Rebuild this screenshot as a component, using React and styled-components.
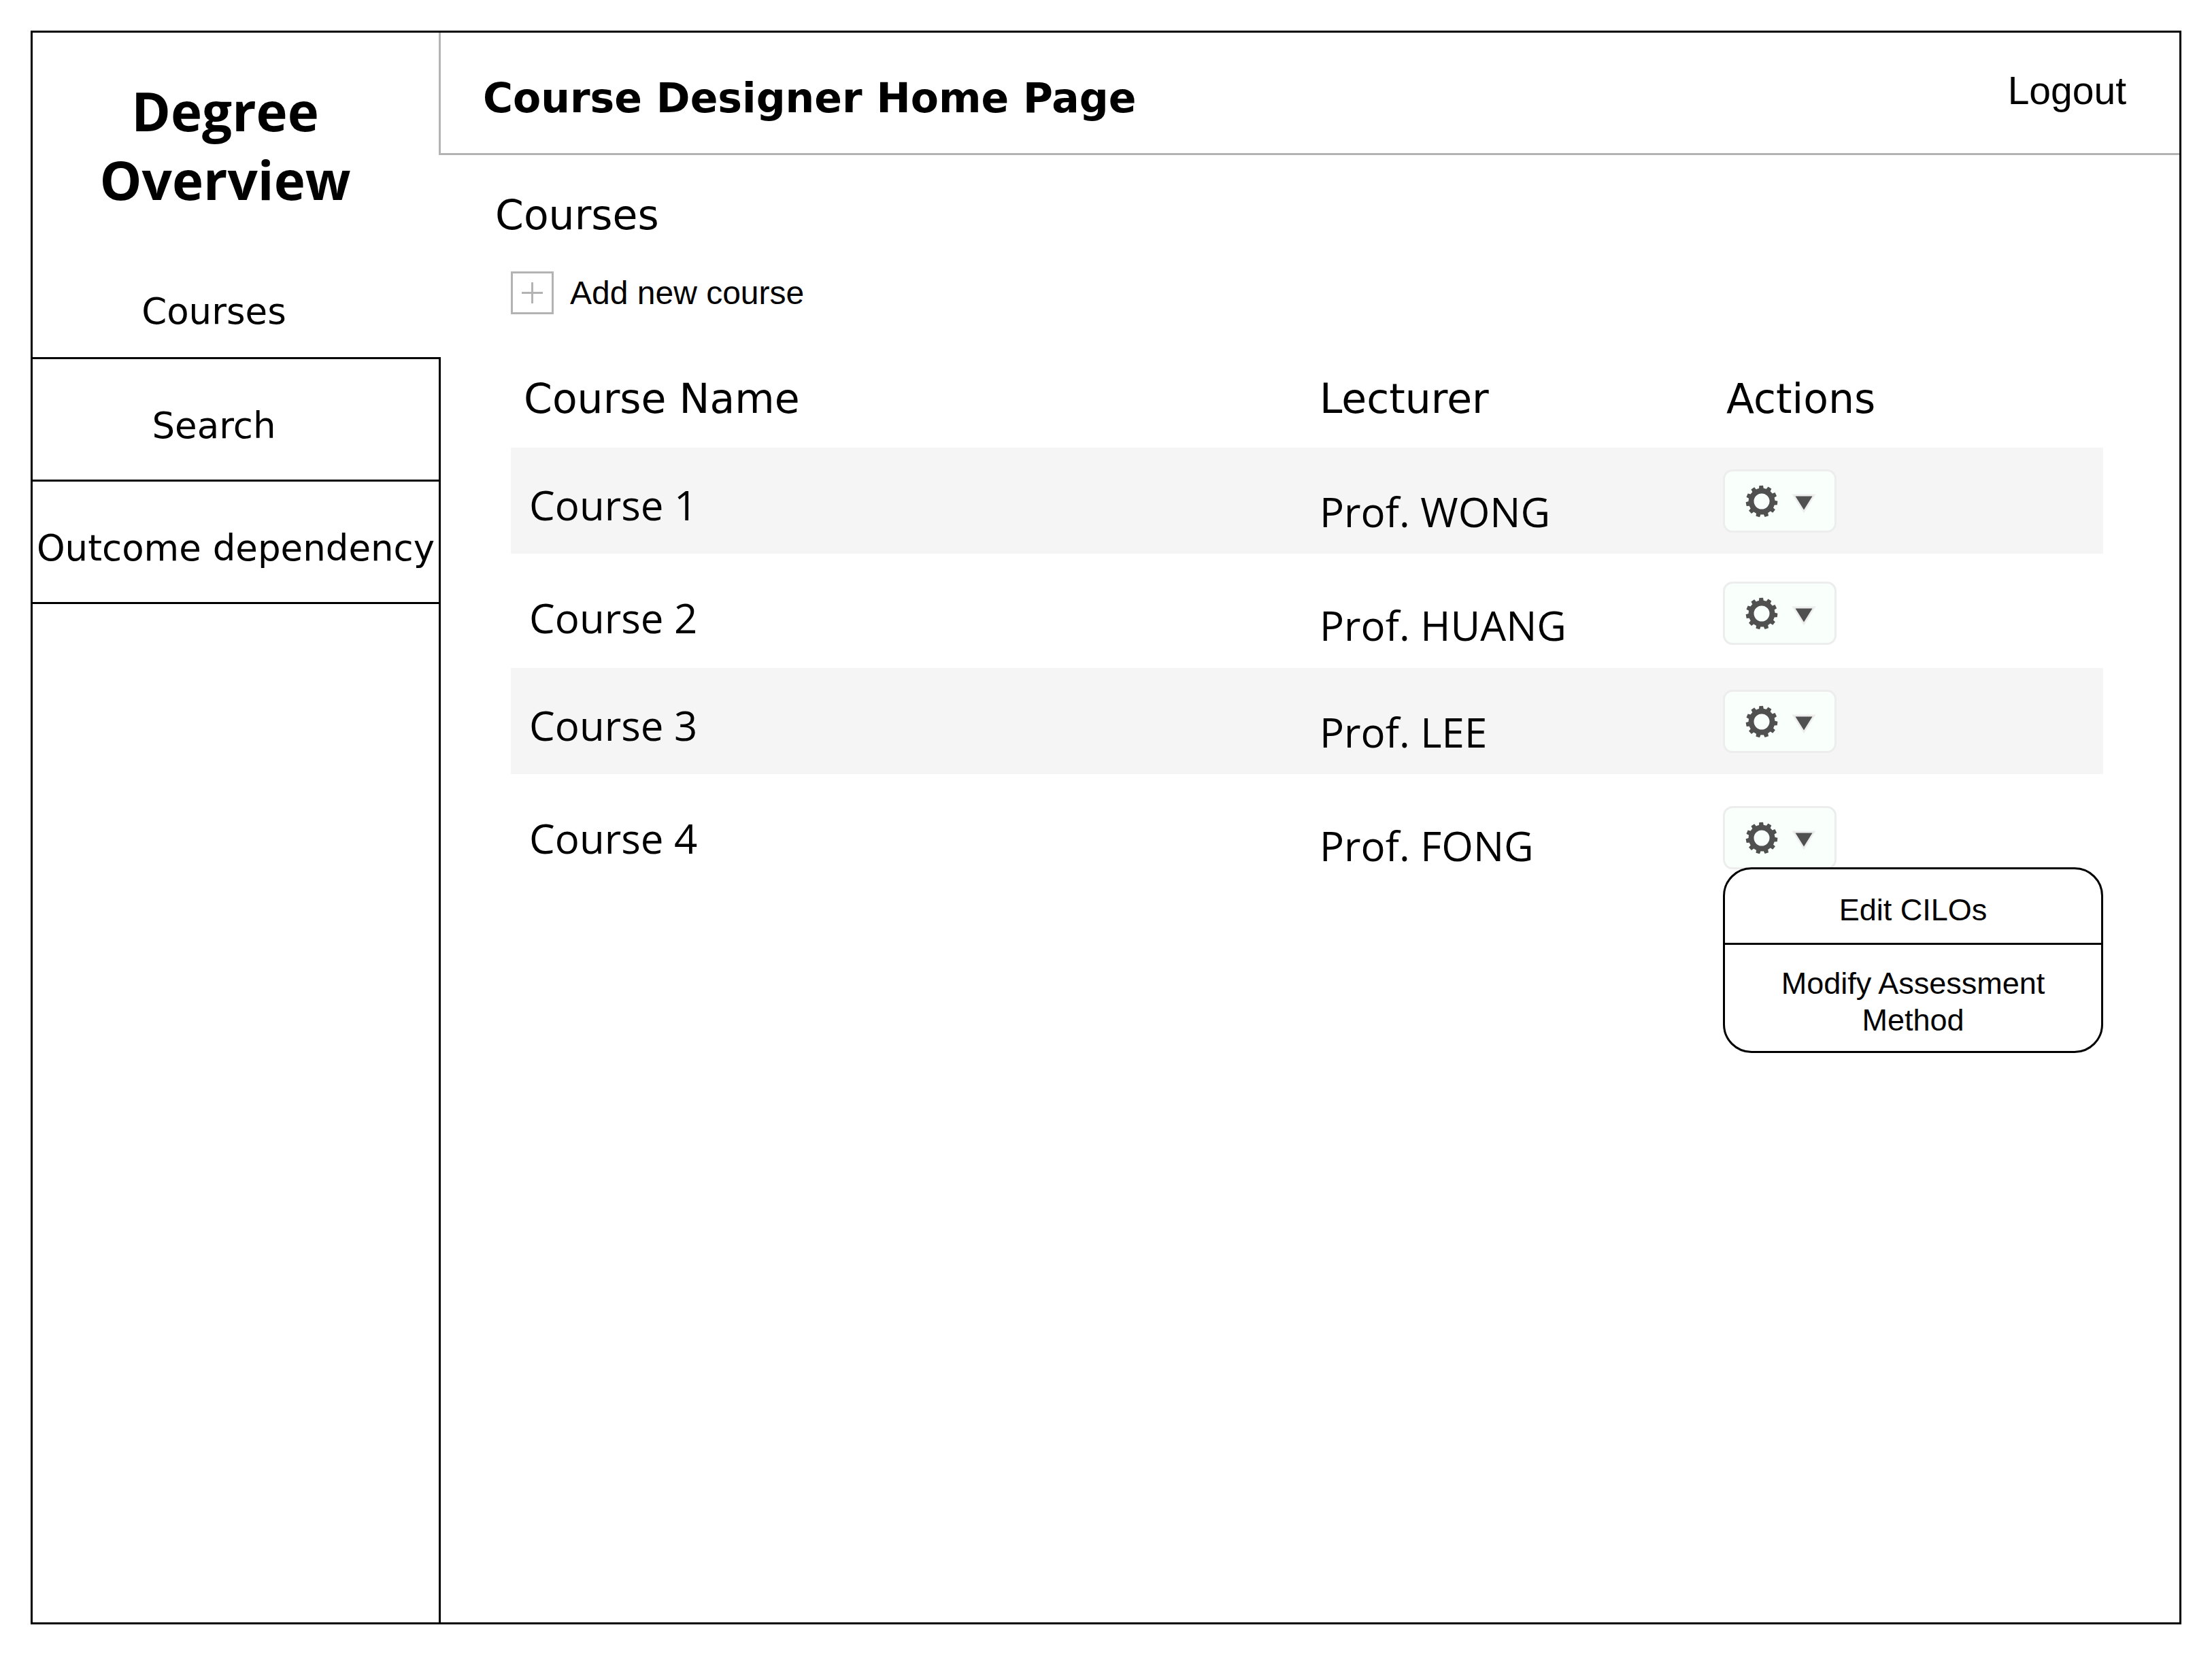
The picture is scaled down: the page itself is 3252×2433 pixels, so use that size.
import React from "react";
import styled, { createGlobalStyle } from "styled-components";

const INK = "#000000";
const RULE = "#b3b3b3";
const ui = `"DejaVu Sans", Verdana, sans-serif`;
const plain = `"Liberation Sans", Arial, sans-serif`;
const hand = `"Comic Sans MS", "Open Sans", sans-serif`;

const GlobalStyle = createGlobalStyle`
  *, *::before, *::after { box-sizing: border-box; }
  body { margin: 0; background: #ffffff; color: ${INK}; font-family: ${ui}; }
  h1, h2, p, ul { margin: 0; padding: 0; }
  ul { list-style: none; }
  a { color: inherit; text-decoration: none; }
  button { font: inherit; color: inherit; cursor: pointer; }
`;

const Page = styled.div`
  min-height: 100vh;
  padding: 45px;
  display: flex;
`;

const Frame = styled.div`
  flex: 1;
  display: grid;
  grid-template-columns: 600px minmax(0, 1fr);
  border: 3px solid ${INK};
`;

const Sidebar = styled.aside`
  display: flex;
  flex-direction: column;
`;

const Brand = styled.p`
  padding: 65px 34px 33px 0;
  font-family: ${hand};
  font-size: 78px;
  font-weight: 700;
  line-height: 101px;
  text-align: center;
`;

const Nav = styled.nav`
  flex: 1;
  display: flex;
  flex-direction: column;
`;

const NavItem = styled.li`
  border-top: 3px solid ${(p) => (p.$current ? "transparent" : INK)};
  border-right: 3px solid ${(p) => (p.$current ? "transparent" : INK)};
`;

const NavLink = styled.a`
  display: block;
  padding: ${(p) => (p.$current ? "77px" : "68px")} ${(p) => (p.$wide ? "0" : "64px")}
    ${(p) => (p.$current ? "37px" : "49px")} 0;
  font-size: 53px;
  line-height: 60px;
  text-align: center;
  white-space: nowrap;
`;

const NavRest = styled.div`
  flex: 1;
  border-top: 3px solid ${INK};
  border-right: 3px solid ${INK};
`;

const Content = styled.div`
  display: flex;
  flex-direction: column;
`;

const Header = styled.header`
  display: flex;
  align-items: flex-start;
  justify-content: space-between;
  height: 180px;
  margin-left: -3px;
  padding: 60px 78px 0 62px;
  border-left: 3px solid ${RULE};
  border-bottom: 3px solid ${RULE};
`;

const Title = styled.h1`
  font-size: 60px;
  font-weight: 700;
  line-height: 72px;
`;

const Logout = styled.a`
  font-family: ${plain};
  font-size: 57px;
  line-height: 50px;
`;

const Main = styled.main`
  padding: 52px 112px 0 103px;
`;

const Heading = styled.h2`
  margin-left: -23px;
  font-size: 60px;
  font-weight: 400;
  line-height: 72px;
`;

const AddButton = styled.button`
  display: flex;
  align-items: center;
  gap: 24px;
  margin-top: 47px;
  padding: 0;
  border: 0;
  background: none;
  font-family: ${plain};
  font-size: 48px;
  line-height: 63px;
`;

const PlusBox = styled.span`
  display: grid;
  place-items: center;
  width: 63px;
  height: 63px;
  border: 3px solid ${RULE};
`;

const Table = styled.table`
  width: 100%;
  margin-top: 88px;
  border-collapse: collapse;
  table-layout: fixed;
`;

const LecturerCol = styled.col`
  width: 593px;
`;

const ActionCol = styled.col`
  width: 559px;
`;

const HeadCell = styled.th`
  padding: 0 0 36px ${(p) => p.$indent || "0"};
  font-size: 60px;
  font-weight: 400;
  line-height: 72px;
  text-align: left;
`;

const Row = styled.tr`
  height: 168px;
  &:nth-child(odd) {
    height: 156px;
    background: #f5f5f5;
  }
`;

const Cell = styled.td`
  padding: 54px 0 0 ${(p) => p.$indent || "0"};
  font-family: ${hand};
  font-size: 60px;
  font-weight: 500;
  line-height: 80px;
  vertical-align: top;
  ${Row}:nth-child(odd) & {
    padding-top: 44px;
  }
`;

const LecturerCell = styled(Cell)`
  padding-top: 65px;
  ${Row}:nth-child(odd) & {
    padding-top: 54px;
  }
`;

const ActionCell = styled.td`
  padding: ${(p) => (p.$open ? "47px" : "41px")} 0 0;
  vertical-align: top;
  ${Row}:nth-child(odd) & {
    padding-top: 32px;
  }
`;

const Dropdown = styled.div`
  position: relative;
`;

const GearButton = styled.button`
  display: flex;
  align-items: center;
  gap: 20px;
  width: 167px;
  height: 93px;
  padding: 0 0 0 30px;
  border: 3px solid #ededed;
  border-radius: 14px;
  background: #f9fffb;
`;

const Menu = styled.ul`
  position: absolute;
  top: 90px;
  left: 0;
  width: 100%;
  border: 3px solid ${INK};
  border-radius: 42px;
  background: #ffffff;
  overflow: hidden;
`;

const MenuItem = styled.li`
  & + & {
    border-top: 3px solid ${INK};
  }
`;

const MenuButton = styled.button`
  display: block;
  width: 100%;
  padding: ${(p) => (p.$tall ? "30px 60px 18px" : "33px 60px 21px")};
  border: 0;
  background: none;
  font-family: ${plain};
  font-size: 45px;
  line-height: 54px;
  text-align: center;
`;

const TEETH = 11;

function gearPath() {
  const at = (r, deg) => {
    const a = (deg * Math.PI) / 180;
    return `${(24 + r * Math.cos(a)).toFixed(2)} ${(24 + r * Math.sin(a)).toFixed(2)}`;
  };
  let d = "";
  for (let i = 0; i < TEETH; i += 1) {
    const c = -92 + (i * 360) / TEETH;
    d += `${i ? "L" : "M"}${at(19.4, c - 10)}L${at(23.4, c - 7)}L${at(23.4, c + 7)}L${at(19.4, c + 10)}`;
    d += `A19.4 19.4 0 0 1 ${at(19.4, c + 360 / TEETH - 10)}`;
  }
  return `${d}ZM35.5 24A11.5 11.5 0 1 0 12.5 24A11.5 11.5 0 1 0 35.5 24Z`;
}

const GEAR = gearPath();

const GearIcon = () => (
  <svg width="48" height="48" viewBox="0 0 48 48" aria-hidden="true">
    <path d={GEAR} fill="#505050" fillRule="evenodd" />
  </svg>
);

const CaretIcon = () => (
  <svg width="36" height="36" viewBox="0 0 36 36" aria-hidden="true">
    <path d="M0.5 7.5H35.5L18 35.5Z" fill="#ededed" />
    <path d="M5.5 10.5H30.5L18 30.5Z" fill="#505050" />
  </svg>
);

const PlusIcon = () => (
  <svg width="31" height="31" viewBox="0 0 31 31" aria-hidden="true">
    <path d="M15.5 0V31M0 15.5H31" stroke={RULE} strokeWidth="3" />
  </svg>
);

const courses = [
  { name: "Course 1", lecturer: "Prof. WONG" },
  { name: "Course 2", lecturer: "Prof. HUANG" },
  { name: "Course 3", lecturer: "Prof. LEE" },
  { name: "Course 4", lecturer: "Prof. FONG", open: true },
];

export default function App() {
  return (
    <>
      <GlobalStyle />
      <Page>
        <Frame>
          <Sidebar>
            <Brand>
              Degree
              <br />
              Overview
            </Brand>
            <Nav>
              <ul>
                <NavItem $current>
                  <NavLink href="#courses" $current aria-current="page">Courses</NavLink>
                </NavItem>
                <NavItem>
                  <NavLink href="#search">Search</NavLink>
                </NavItem>
                <NavItem>
                  <NavLink href="#outcomes" $wide>Outcome dependency</NavLink>
                </NavItem>
              </ul>
              <NavRest />
            </Nav>
          </Sidebar>
          <Content>
            <Header>
              <Title>Course Designer Home Page</Title>
              <Logout href="#logout">Logout</Logout>
            </Header>
            <Main>
              <Heading>Courses</Heading>
              <AddButton type="button">
                <PlusBox>
                  <PlusIcon />
                </PlusBox>
                Add new course
              </AddButton>
              <Table>
                <colgroup>
                  <col />
                  <LecturerCol />
                  <ActionCol />
                </colgroup>
                <thead>
                  <tr>
                    <HeadCell scope="col" $indent="19px">Course Name</HeadCell>
                    <HeadCell scope="col">Lecturer</HeadCell>
                    <HeadCell scope="col" $indent="5px">Actions</HeadCell>
                  </tr>
                </thead>
                <tbody>
                  {courses.map((course) => (
                    <Row key={course.name}>
                      <Cell $indent="27px">{course.name}</Cell>
                      <LecturerCell>{course.lecturer}</LecturerCell>
                      <ActionCell $open={course.open}>
                        <Dropdown>
                          <GearButton
                            type="button"
                            aria-label={`Actions for ${course.name}`}
                            aria-expanded={Boolean(course.open)}
                          >
                            <GearIcon />
                            <CaretIcon />
                          </GearButton>
                          {course.open && (
                            <Menu>
                              <MenuItem>
                                <MenuButton type="button">Edit CILOs</MenuButton>
                              </MenuItem>
                              <MenuItem>
                                <MenuButton type="button" $tall>Modify Assessment Method</MenuButton>
                              </MenuItem>
                            </Menu>
                          )}
                        </Dropdown>
                      </ActionCell>
                    </Row>
                  ))}
                </tbody>
              </Table>
            </Main>
          </Content>
        </Frame>
      </Page>
    </>
  );
}
